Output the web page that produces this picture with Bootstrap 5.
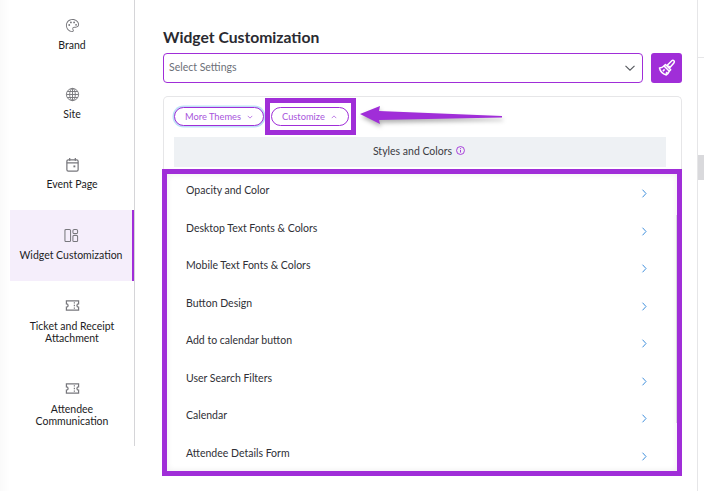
<!DOCTYPE html>
<html lang="en">
<head>
    <meta charset="UTF-8">
    <meta name="viewport" content="width=device-width, initial-scale=1.0">
    <title>Widget Customization</title>
    <link rel="stylesheet" href="https://cdn.jsdelivr.net/npm/bootstrap@5.3.0/dist/css/bootstrap.min.css">
    <style>
        html, body {
            height: 100%;
            overflow: hidden;
        }
        body {
            background-color: #fff;
            font-family: "Lato", "Open Sans", sans-serif;
            color: #2b2b33;
        }
        .page-wrap {
            height: 491px;
            padding-left: 10px;
            background: linear-gradient(90deg, #fafafa, #fff 10px);
        }
        .side-menu {
            width: 125px;
            height: 446px;
            flex: none;
            background: #fff;
            border-right: 1px solid #d5d5d8;
        }
        .side-item {
            height: 70px;
            padding-top: 18px;
            text-align: center;
            font-size: 10.5px;
            line-height: 12px;
            color: #1c1c24;
        }
        .side-item svg {
            display: block;
            width: 15px;
            height: 15px;
            margin: 0 auto 6px;
            color: #77777c;
        }
        .side-item.nudge {
            padding-top: 17px;
        }
        .side-item.tall {
            height: 82px;
            padding-top: 17px;
        }
        .side-item.tall svg {
            margin-bottom: 7px;
        }
        .side-item.tall.last-item {
            height: 83px;
            padding-top: 18px;
        }
        .side-item.active-item {
            height: 71px;
            background: #f5eefb;
            border-right: 2px solid #a02ed8;
        }
        .main-panel {
            width: 563px;
            height: 491px;
            flex: none;
            padding: 26px 15px 0 28px;
            border-right: 1px solid #e6e6e8;
        }
        .main-title {
            font-size: 15.7px;
            line-height: 22px;
            font-weight: 700;
            margin: 0 0 5px;
            color: #2a2a30;
        }
        .settings-select {
            height: 30px;
            width: 480px;
            border: 1px solid #a02ed8;
            border-radius: 4px;
            padding: 0 6px 0 5px;
            font-size: 10.5px;
            color: #6c7078;
        }
        .brush-btn {
            width: 31px;
            height: 30px;
            border-radius: 3px;
            background: #a02ed8;
        }
        .theme-card {
            width: 519px;
            margin-top: 13px;
            height: 380px;
            border: 1px solid #e6e6e8;
            border-bottom: 0;
            border-radius: 5px 5px 0 0;
            padding: 10px 15px 0 10px;
        }
        .pill-btn {
            height: 19px;
            border: 1px solid #a02ed8;
            border-radius: 10px;
            background: #fff;
            color: #a855dc;
            font-size: 9.3px;
            padding: 0 0 0 10px;
            line-height: 1;
        }
        .pill-btn svg {
            margin-left: 6px;
        }
        .pill-btn.glow {
            width: 90px;
            box-shadow: 0 0 0 1.5px #bfe0f7;
        }
        .pill-btn.plain {
            width: 78px;
        }
        .pill-gap {
            gap: 7px;
        }
        .styles-bar {
            height: 30px;
            margin-top: 11px;
            padding-right: 2px;
            background: #eef1f4;
            font-size: 10.5px;
            color: #3b3b42;
        }
        .list-frame {
            width: 520px;
            height: 307px;
            margin: 2px 0 0 -12px;
            border: 5px solid #a02ed8;
            overflow: hidden;
            position: relative;
            background: #fff;
            box-shadow: inset 0 0 6px rgba(0, 0, 0, .08);
        }
        .set-row {
            height: 37.5px;
            padding: 8px 29px 0 19px;
            font-size: 10.5px;
            line-height: 16px;
            color: #2f3036;
            background: transparent;
        }
        .set-row svg {
            margin-top: 7px;
        }
        .inner-scroll {
            position: absolute;
            right: 0;
            top: 41px;
            width: 1px;
            height: 208px;
            background: #d8d8dc;
        }
        .hl-box {
            position: absolute;
            left: 265px;
            top: 98px;
            width: 91px;
            height: 37px;
            border: 5px solid #a02ed8;
        }
        .hl-arrow {
            position: absolute;
            left: 358px;
            top: 103px;
            filter: drop-shadow(1px 3px 2px rgba(0, 0, 0, .3));
        }
        .side-strip {
            flex: 1;
            position: relative;
        }
        .strip-line {
            height: 1px;
            margin-top: 57px;
            background: #e6e6e8;
        }
        .strip-thumb {
            height: 25px;
            margin-top: 97px;
            background: #d9d9dc;
        }
    </style>
</head>
<body>
    <div class="page-wrap d-flex">
        <div class="side-menu">
            <div class="side-item">
                <svg viewBox="0 0 16 16" fill="currentColor"><path d="M8 1C4 1 1 4 1 7.8 1 11.6 4 15 7.6 15c1.2 0 1.8-.8 1.8-1.7 0-.5-.2-.8-.4-1.1-.2-.3-.3-.5-.3-.8 0-.7.5-1.1 1.2-1.1h1.5C13.600 10.300 15 8.900 15 7 15 3.700 11.900 1 8 1zm0 1c3.400 0 6 2.300 6 5 0 1.400-1 2.300-2.500 2.300H10c-1.300 0-2.200.9-2.200 2.100 0 .6.200 1 .4 1.300.2.200.2.400.2.600 0 .4-.3.700-.8.700C4.500 14 2 11.100 2 7.800 2 4.600 4.600 2 8 2z"/><circle cx="4.500" cy="7.500" r="1"/><circle cx="6.300" cy="4.700" r="1"/><circle cx="9.700" cy="4.700" r="1"/><circle cx="11.800" cy="7.300" r="1"/></svg>
                Brand
            </div>
            <div class="side-item nudge">
                <svg viewBox="0 0 16 16" fill="none" stroke="currentColor" stroke-width="1"><circle cx="8" cy="8" r="6.500"/><ellipse cx="8" cy="8" rx="3" ry="6.500"/><path d="M8 1.500v13M1.500 8h13M2.400 4.800h11.200M2.400 11.200h11.200"/></svg>
                Site
            </div>
            <div class="side-item nudge">
                <svg viewBox="0 0 16 16" fill="none" stroke="currentColor" stroke-width="1.300"><rect x="2" y="3" width="12" height="12" rx="1.500"/><path d="M2 6.300h12M5 1v3M11 1v3"/><rect x="9" y="9" width="2" height="2" fill="currentColor" stroke="none"/></svg>
                Event Page
            </div>
            <div class="side-item active-item">
                <svg viewBox="0 0 16 16" fill="none" stroke="currentColor" stroke-width="1.100"><rect x="1" y="1.500" width="6" height="13" rx="1.200"/><rect x="9.500" y="1.500" width="5" height="4.500" rx="1.500"/><rect x="9.500" y="8" width="5" height="6.500" rx="1"/></svg>
                Widget Customization
            </div>
            <div class="side-item tall">
                <svg viewBox="0 0 16 16" fill="none" stroke="currentColor" stroke-width="1.300"><path d="M1.500 3h13v3.200a1.800 1.800 0 0 0 0 3.600V13h-13V9.800a1.800 1.800 0 0 0 0-3.600z"/><path d="M10 4.500v1.300M10 7.300v1.400M10 10.200v1.300"/></svg>
                Ticket and Receipt<br>Attachment
            </div>
            <div class="side-item tall last-item">
                <svg viewBox="0 0 16 16" fill="none" stroke="currentColor" stroke-width="1.300"><path d="M1.500 3h13v3.200a1.800 1.800 0 0 0 0 3.600V13h-13V9.800a1.800 1.800 0 0 0 0-3.600z"/><path d="M10 4.500v1.300M10 7.300v1.400M10 10.200v1.300"/></svg>
                Attendee<br>Communication
            </div>
        </div>

        <div class="main-panel">
            <h1 class="main-title">Widget Customization</h1>
            <div class="d-flex gap-2">
                <div class="settings-select d-flex align-items-center justify-content-between">
                    <span>Select Settings</span>
                    <svg width="12" height="12" viewBox="0 0 12 12" fill="none" stroke="#55585e" stroke-width="1.100"><path d="M1.500 3.800 6 8.200l4.500-4.400"/></svg>
                </div>
                <div class="brush-btn d-flex align-items-center justify-content-center">
                    <svg width="18" height="18" viewBox="0 0 18 18" fill="none" stroke="#fff" stroke-width="1.500" stroke-linejoin="round"><path d="m9.500 6 4.300-4.200c.6-.6 1.500-.6 2.100 0s.6 1.500 0 2.100L11.900 8.500z"/><path d="m7.500 5.500 5.200 5.200-1.400 1.500-5.300-5.300z"/><path d="M6 7c-1 1-2.500 1.800-4.500 2 .5 2.500 3 5.800 6.800 7 1.300-1 2.500-2.500 3-3.800"/><path d="m4.800 12.200 1.800-1.800M7.800 14.800l1.600-1.900"/></svg>
                </div>
            </div>
            <div class="theme-card">
                <div class="d-flex pill-gap">
                    <button class="pill-btn glow d-flex align-items-center" type="button">More Themes<svg width="6" height="6" viewBox="0 0 8 8" fill="none" stroke="#a855dc"><path d="m1 2.500 3 3 3-3"/></svg></button>
                    <button class="pill-btn plain d-flex align-items-center" type="button">Customize<svg width="6" height="6" viewBox="0 0 8 8" fill="none" stroke="#a855dc"><path d="m1 5.500 3-3 3 3"/></svg></button>
                </div>
                <div class="styles-bar d-flex align-items-center justify-content-center gap-1">
                    <span>Styles and Colors</span>
                    <svg class="mb-1" width="9" height="9" viewBox="0 0 10 10" fill="none" stroke="#a02ed8"><circle cx="5" cy="5" r="4.400"/><path d="M5 4.300v3M5 2.300v1"/></svg>
                </div>
                <div class="list-frame">
                    <div class="d-flex justify-content-between set-row"><span>Opacity and Color</span><svg width="7" height="9" viewBox="0 0 7 9" fill="none" stroke="#3f8fdc"><path d="m1.500 .7 3.500 3.800-3.500 3.800"/></svg></div>
                    <div class="d-flex justify-content-between set-row"><span>Desktop Text Fonts &amp; Colors</span><svg width="7" height="9" viewBox="0 0 7 9" fill="none" stroke="#3f8fdc"><path d="m1.500 .7 3.500 3.800-3.500 3.800"/></svg></div>
                    <div class="d-flex justify-content-between set-row"><span>Mobile Text Fonts &amp; Colors</span><svg width="7" height="9" viewBox="0 0 7 9" fill="none" stroke="#3f8fdc"><path d="m1.500 .7 3.500 3.800-3.500 3.800"/></svg></div>
                    <div class="d-flex justify-content-between set-row"><span>Button Design</span><svg width="7" height="9" viewBox="0 0 7 9" fill="none" stroke="#3f8fdc"><path d="m1.500 .7 3.500 3.800-3.500 3.800"/></svg></div>
                    <div class="d-flex justify-content-between set-row"><span>Add to calendar button</span><svg width="7" height="9" viewBox="0 0 7 9" fill="none" stroke="#3f8fdc"><path d="m1.500 .7 3.500 3.800-3.500 3.800"/></svg></div>
                    <div class="d-flex justify-content-between set-row"><span>User Search Filters</span><svg width="7" height="9" viewBox="0 0 7 9" fill="none" stroke="#3f8fdc"><path d="m1.500 .7 3.500 3.800-3.500 3.800"/></svg></div>
                    <div class="d-flex justify-content-between set-row"><span>Calendar</span><svg width="7" height="9" viewBox="0 0 7 9" fill="none" stroke="#3f8fdc"><path d="m1.500 .7 3.500 3.800-3.500 3.800"/></svg></div>
                    <div class="d-flex justify-content-between set-row"><span>Attendee Details Form</span><svg width="7" height="9" viewBox="0 0 7 9" fill="none" stroke="#3f8fdc"><path d="m1.500 .7 3.500 3.800-3.500 3.800"/></svg></div>
                    <div class="inner-scroll"></div>
                </div>
            </div>
        </div>
        <div class="side-strip">
            <div class="strip-line"></div>
            <div class="strip-thumb"></div>
        </div>
    </div>

    <div class="hl-box"></div>
    <svg class="hl-arrow" width="146" height="24" viewBox="0 0 146 24"><path d="M2 11 22 3l-1 5 123 5v1.500L21 17l1 4z" fill="#a02ed8"/></svg>

    <script src="https://cdn.jsdelivr.net/npm/bootstrap@5.3.0/dist/js/bootstrap.bundle.min.js"></script>
</body>
</html>
